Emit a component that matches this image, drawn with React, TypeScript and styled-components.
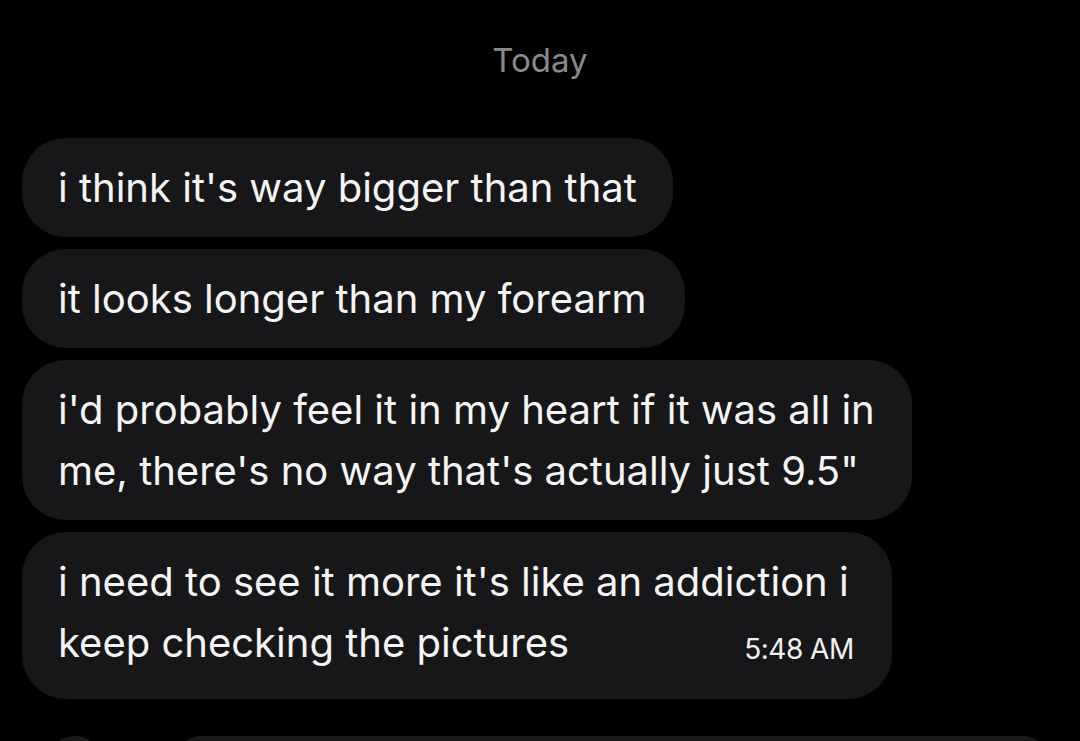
import React from "react";
import styled, { createGlobalStyle } from "styled-components";

const Global = createGlobalStyle`
  html, body { margin: 0; padding: 0; background: #000; }
  body { font-family: Inter, "Noto Sans", sans-serif; overflow: hidden; }
`;

const Screen = styled.div`
  width: 1080px;
  height: 741px;
  background: #000;
  display: flex;
  flex-direction: column;
  padding: 0 0 0 22px;
  box-sizing: border-box;
  overflow: hidden;
`;

const DateLabel = styled.div`
  align-self: center;
  margin: 40px 0 0 -22px;
  font-size: 33px;
  line-height: 40px;
  color: #8a8a8d;
`;

const Thread = styled.div`
  display: flex;
  flex-direction: column;
  align-items: flex-start;
  gap: 12px;
  margin-top: 58px;
`;

const Bubble = styled.div<{ $right?: number }>`
  background: #17171a;
  color: #f4f4f4;
  font-size: 40px;
  line-height: 61px;
  padding: 19px ${(p) => p.$right ?? 36}px 19px 36px;
  border-radius: 44px;
  box-sizing: border-box;
`;

const Time = styled.span`
  float: right;
  font-size: 28px;
  line-height: 61px;
  margin: 7px -5px 0 20px;
  color: #f0f0f0;
  letter-spacing: -0.5px;
`;

const Composer = styled.div`
  display: flex;
  align-items: flex-start;
  gap: 70px;
  margin-top: 37px;
  padding-left: 26px;
`;

const Avatar = styled.div`
  width: 54px;
  height: 54px;
  border-radius: 50%;
  background: #1a1a1c;
  flex: none;
`;

const Input = styled.div`
  width: 880px;
  height: 60px;
  border-radius: 30px;
  background: #19191b;
`;

export default function App() {
  return (
    <Screen>
      <Global />
      <DateLabel>Today</DateLabel>
      <Thread>
        <Bubble>i think it's way bigger than that</Bubble>
        <Bubble $right={38}>it looks longer than my forearm</Bubble>
        <Bubble $right={37}>
          i'd probably feel it in my heart if it was all in
          <br />
          me, there's no way that's actually just 9.5"
        </Bubble>
        <Bubble $right={43}>
          i need to see it more it's like an addiction i
          <br />
          keep checking the pictures
          <Time>5:48 AM</Time>
        </Bubble>
      </Thread>
      <Composer>
        <Avatar />
        <Input />
      </Composer>
    </Screen>
  );
}
